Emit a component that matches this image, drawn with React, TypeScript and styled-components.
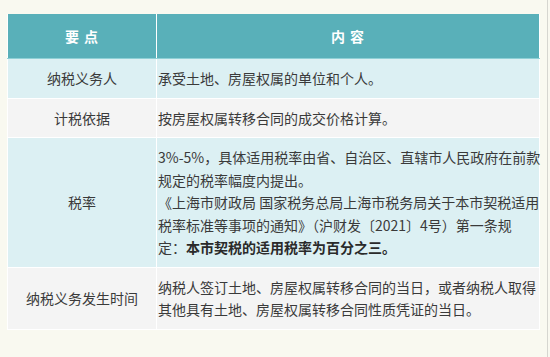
import React from "react";
import styled, { createGlobalStyle } from "styled-components";

const GlobalStyle = createGlobalStyle`
  html, body {
    margin: 0;
    padding: 0;
    background: #f9f9f0;
  }
  body {
    font-family: "Noto Sans CJK SC", "Noto Sans", "Liberation Sans", sans-serif;
    color: #333;
  }
`;

const Page = styled.div`
  width: 548px;
  min-height: 357px;
  box-sizing: border-box;
  padding: 14px 0 0 7px;
  border-right: 1px solid #d6d6d0;
  background: #f9f9f0;
`;

const Table = styled.table`
  width: 533px;
  table-layout: fixed;
  border-collapse: collapse;
  font-size: 14px;
  line-height: 22.5px;
`;

const HeadCell = styled.th`
  height: 44px;
  padding: 0;
  background: #59b0b9;
  color: #fff;
  font-weight: 700;
  font-size: 14px;
  letter-spacing: 1px;
  text-align: center;
  border-left: 1px solid #fff;
  border-right: 1px solid #fff;
  border-bottom: 1px solid #8fd0d6;
`;

const Row = styled.tr<{ $tone: "cyan" | "gray" }>`
  background: ${(p) => (p.$tone === "cyan" ? "#dcf0f3" : "#f4f4f4")};
`;

const KeyCell = styled.td`
  padding: 8px 4px;
  text-align: center;
  vertical-align: middle;
  color: #3a3a3a;
  border: 1px solid #fff;
`;

const ValueCell = styled.td`
  padding: 8px 0 8px 1px;
  text-align: left;
  vertical-align: middle;
  color: #3a3a3a;
  border: 1px solid #fff;
  white-space: nowrap;
`;

const Strong = styled.strong`
  font-weight: 700;
  color: #2a2a2a;
`;

export default function App() {
  return (
    <>
      <GlobalStyle />
      <Page>
        <Table>
          <colgroup>
            <col style={{ width: "149px" }} />
            <col />
          </colgroup>
          <thead>
            <tr>
              <HeadCell>要 点</HeadCell>
              <HeadCell>内 容</HeadCell>
            </tr>
          </thead>
          <tbody>
            <Row $tone="cyan">
              <KeyCell>纳税义务人</KeyCell>
              <ValueCell>承受土地、房屋权属的单位和个人。</ValueCell>
            </Row>
            <Row $tone="gray">
              <KeyCell>计税依据</KeyCell>
              <ValueCell>按房屋权属转移合同的成交价格计算。</ValueCell>
            </Row>
            <Row $tone="cyan">
              <KeyCell>税率</KeyCell>
              <ValueCell>
                3%-5%，具体适用税率由省、自治区、直辖市人民政府在前款
                <br />
                规定的税率幅度内提出。
                <br />
                《上海市财政局 国家税务总局上海市税务局关于本市契税适用
                <br />
                税率标准等事项的通知》（沪财发〔2021〕4号）第一条规
                <br />
                定：<Strong>本市契税的适用税率为百分之三。</Strong>
              </ValueCell>
            </Row>
            <Row $tone="gray">
              <KeyCell>纳税义务发生时间</KeyCell>
              <ValueCell>
                纳税人签订土地、房屋权属转移合同的当日，或者纳税人取得
                <br />
                其他具有土地、房屋权属转移合同性质凭证的当日。
              </ValueCell>
            </Row>
          </tbody>
        </Table>
      </Page>
    </>
  );
}
